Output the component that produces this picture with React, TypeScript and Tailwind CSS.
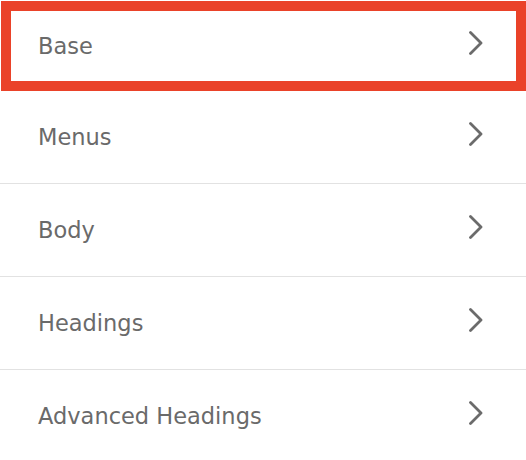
import React from "react";

const items = ["Base", "Menus", "Body", "Headings", "Advanced Headings"];

function Chevron() {
  return (
    <svg width="16" height="24" viewBox="0 0 16 24" fill="none" className="shrink-0">
      <path d="M2.5 1.5 L13 12 L2.5 22.5" stroke="#6b6b6b" strokeWidth="2.8" strokeLinecap="round" strokeLinejoin="round" />
    </svg>
  );
}

export default function App() {
  return (
    <div
      className="w-[526px] h-[460px] overflow-hidden bg-white pt-px"
      style={{ fontFamily: '"DejaVu Sans", Verdana, sans-serif' }}
    >
      {items.map((label, i) => (
        <div
          key={label}
          className={
            i === 0
              ? "ml-px h-[90px] border-[10px] border-[#ea4229] flex items-center justify-between pl-[27px] pr-[32px]"
              : "h-[93px] border-b border-[#e2e2e2] flex items-center justify-between pl-[38px] pr-[42px]"
          }
        >
          <span className="text-[22.5px] leading-none text-[#6a6a6a]">{label}</span>
          <div className="-mt-[7px]">
            <Chevron />
          </div>
        </div>
      ))}
    </div>
  );
}
